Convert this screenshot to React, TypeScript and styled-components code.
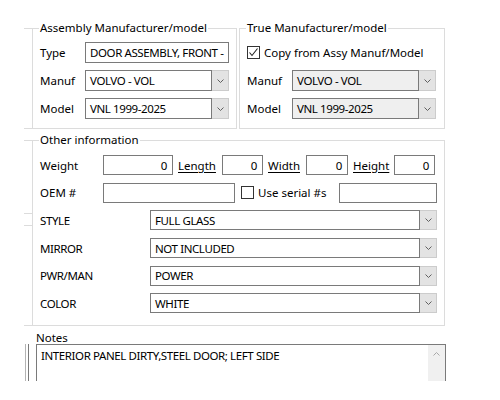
import styled, { createGlobalStyle } from 'styled-components';

const GlobalStyle = createGlobalStyle`
  html, body {
    margin: 0;
    padding: 0;
    background: #fff;
  }
  body {
    font-family: "Noto Sans", "Liberation Sans", sans-serif;
    font-size: 11.5px;
    color: #000;
  }
`;

const Page = styled.div`
  width: 500px;
  height: 400px;
  overflow: hidden;
  box-sizing: border-box;
  padding: 20px 0 0 24px;
  display: flex;
  flex-direction: column;
`;

const Band = styled.div<{ $top?: number }>`
  position: relative;
  display: flex;
  gap: 2px;
  padding-left: 8px;
  margin-top: ${(p) => p.$top ?? 0}px;
`;

const Stub = styled.span<{ $y: number }>`
  position: absolute;
  left: 0;
  top: ${(p) => p.$y}px;
  width: 8px;
  height: 1px;
  background: #dcdcdc;
`;

const GroupBox = styled.fieldset<{ $width: number; $gap?: number; $top?: number; $bottom?: number }>`
  box-sizing: border-box;
  width: ${(p) => p.$width}px;
  min-width: 0;
  margin: 0;
  padding: ${(p) => p.$top ?? 6}px 6px ${(p) => p.$bottom ?? 9}px 7px;
  border: 1px solid #dcdcdc;
  display: flex;
  flex-direction: column;
  gap: ${(p) => p.$gap ?? 7}px;
`;

const Legend = styled.legend`
  padding: 0 1px;
  margin-left: -1px;
  font-size: 11.5px;
  line-height: 16px;
`;

const Row = styled.div<{ $h?: number }>`
  display: flex;
  align-items: center;
  height: ${(p) => p.$h ?? 21}px;
`;

const Label = styled.span<{ $w: number; $caps?: boolean }>`
  flex: none;
  width: ${(p) => p.$w}px;
  white-space: nowrap;
  letter-spacing: ${(p) => (p.$caps ? '-0.4px' : 'normal')};
`;

const TextBox = styled.div<{ $w: number; $right?: boolean }>`
  flex: none;
  box-sizing: border-box;
  width: ${(p) => p.$w}px;
  height: 100%;
  border: 1px solid #7a7a7a;
  background: #fff;
  padding: 0 5px 0 4px;
  display: flex;
  align-items: center;
  justify-content: ${(p) => (p.$right ? 'flex-end' : 'flex-start')};
  white-space: nowrap;
  overflow: hidden;
  letter-spacing: -0.4px;
`;

const LinkLabel = styled.span<{ $w: number }>`
  flex: none;
  width: ${(p) => p.$w}px;
  padding-left: 5px;
  box-sizing: border-box;
  text-decoration: underline;
  text-underline-offset: 2px;
  white-space: nowrap;
`;

const ComboWrap = styled.div<{ $w: number }>`
  flex: none;
  display: flex;
  width: ${(p) => p.$w}px;
  height: 100%;
`;

const ComboField = styled.div<{ $disabled?: boolean }>`
  flex: 1;
  box-sizing: border-box;
  border: 1px solid #7a7a7a;
  background: ${(p) => (p.$disabled ? '#efefef' : '#fff')};
  padding-left: 4px;
  display: flex;
  align-items: center;
  white-space: nowrap;
  overflow: hidden;
  letter-spacing: -0.4px;
`;

const ComboButton = styled.div`
  flex: none;
  box-sizing: border-box;
  width: 17px;
  background: #e3e3e3;
  border: 1px solid #cccccc;
  border-left: none;
  display: flex;
  align-items: center;
  justify-content: center;
`;

const CheckBox = styled.span<{ $gap?: number }>`
  flex: none;
  box-sizing: border-box;
  width: 13px;
  height: 13px;
  margin-left: ${(p) => p.$gap ?? 0}px;
  border: 1px solid #333;
  background: #fff;
  display: flex;
  align-items: center;
  justify-content: center;
`;

const CheckText = styled.span`
  margin-left: 4px;
  white-space: nowrap;
`;

const NotesRow = styled.div`
  display: flex;
  margin-top: 5px;
`;

const EdgeLines = styled.div`
  flex: none;
  width: 12px;
  height: 37px;
  margin-top: 13px;
  box-sizing: border-box;
  padding-left: 1px;
  display: flex;
  gap: 2px;
  &::before,
  &::after {
    content: '';
    width: 1px;
    height: 100%;
  }
  &::before {
    background: #b4b4b4;
  }
  &::after {
    background: #7a7a7a;
  }
`;

const NotesColumn = styled.div`
  display: flex;
  flex-direction: column;
`;

const NotesLabel = styled.span`
  line-height: 13px;
`;

const NotesArea = styled.div`
  box-sizing: border-box;
  width: 410px;
  height: 37px;
  border: 1px solid #7a7a7a;
  border-bottom: none;
  display: flex;
`;

const NotesText = styled.div`
  flex: 1;
  padding: 3px 4px;
  line-height: 15px;
  white-space: nowrap;
  letter-spacing: -0.4px;
`;

const ScrollBar = styled.div`
  flex: none;
  width: 17px;
  background: #f0f0f0;
  display: flex;
  justify-content: center;
  padding-top: 7px;
  box-sizing: border-box;
`;

const Chevron = ({ up, color = '#606060' }: { up?: boolean; color?: string }) => (
  <svg width="7" height="4" viewBox="0 0 7 4">
    <polyline
      points={up ? '0.5,3.5 3.5,0.5 6.5,3.5' : '0.5,0.5 3.5,3.5 6.5,0.5'}
      fill="none"
      stroke={color}
      strokeWidth="1"
    />
  </svg>
);

const Check = () => (
  <svg width="11" height="11" viewBox="0 0 11 11">
    <polyline points="1.5,5.5 4,8.5 9.5,1.5" fill="none" stroke="#222" strokeWidth="1.1" />
  </svg>
);

const Combo = ({ w, value, disabled }: { w: number; value: string; disabled?: boolean }) => (
  <ComboWrap $w={w}>
    <ComboField $disabled={disabled}>{value}</ComboField>
    <ComboButton>
      <Chevron />
    </ComboButton>
  </ComboWrap>
);

const attributes = [
  { name: 'STYLE', value: 'FULL GLASS' },
  { name: 'MIRROR', value: 'NOT INCLUDED' },
  { name: 'PWR/MAN', value: 'POWER' },
  { name: 'COLOR', value: 'WHITE' },
];

export default function App() {
  return (
    <>
      <GlobalStyle />
      <Page>
        <Band>
          <Stub $y={8} />
          <Stub $y={108} />
          <GroupBox $width={205}>
            <Legend>Assembly Manufacturer/model</Legend>
            <Row>
              <Label $w={45}>Type</Label>
              <TextBox $w={144}>DOOR ASSEMBLY, FRONT -</TextBox>
            </Row>
            <Row>
              <Label $w={45}>Manuf</Label>
              <Combo w={144} value="VOLVO - VOL" />
            </Row>
            <Row>
              <Label $w={45}>Model</Label>
              <Combo w={144} value="VNL 1999-2025" />
            </Row>
          </GroupBox>
          <GroupBox $width={206}>
            <Legend>True Manufacturer/model</Legend>
            <Row>
              <CheckBox>
                <Check />
              </CheckBox>
              <CheckText>Copy from Assy Manuf/Model</CheckText>
            </Row>
            <Row>
              <Label $w={45}>Manuf</Label>
              <Combo w={144} value="VOLVO - VOL" disabled />
            </Row>
            <Row>
              <Label $w={45}>Model</Label>
              <Combo w={144} value="VNL 1999-2025" disabled />
            </Row>
          </GroupBox>
        </Band>

        <Band $top={3}>
          <Stub $y={8} />
          <Stub $y={81} />
          <Stub $y={93} />
          <Stub $y={193} />
          <GroupBox $width={413} $gap={7.7} $top={7} $bottom={12}>
            <Legend>Other information</Legend>
            <Row $h={20}>
              <Label $w={63}>Weight</Label>
              <TextBox $w={70} $right>0</TextBox>
              <LinkLabel $w={49}>Length</LinkLabel>
              <TextBox $w={41} $right>0</TextBox>
              <LinkLabel $w={43}>Width</LinkLabel>
              <TextBox $w={42} $right>0</TextBox>
              <LinkLabel $w={46}>Height</LinkLabel>
              <TextBox $w={41} $right>0</TextBox>
            </Row>
            <Row $h={20}>
              <Label $w={63}>OEM #</Label>
              <TextBox $w={132} />
              <CheckBox $gap={6} />
              <CheckText>Use serial #s</CheckText>
              <TextBox $w={98} style={{ marginLeft: 'auto', marginRight: 1 }} />
            </Row>
            {attributes.map((a) => (
              <Row $h={20} key={a.name}>
                <Label $w={110} $caps>
                  {a.name}
                </Label>
                <Combo w={287} value={a.value} />
              </Row>
            ))}
          </GroupBox>
        </Band>

        <NotesRow>
          <EdgeLines />
          <NotesColumn>
            <NotesLabel>Notes</NotesLabel>
            <NotesArea>
              <NotesText>INTERIOR PANEL DIRTY,STEEL DOOR; LEFT SIDE</NotesText>
              <ScrollBar>
                <Chevron up color="#a8a8a8" />
              </ScrollBar>
            </NotesArea>
          </NotesColumn>
        </NotesRow>
      </Page>
    </>
  );
}
